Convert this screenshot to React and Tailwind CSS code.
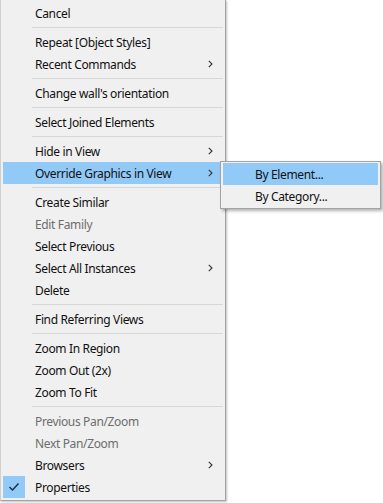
import React from "react";

const items = [
  { label: "Cancel" },
  { sep: true },
  { label: "Repeat [Object Styles]" },
  { label: "Recent Commands", sub: true },
  { sep: true },
  { label: "Change wall's orientation" },
  { sep: true },
  { label: "Select Joined Elements" },
  { sep: true },
  { label: "Hide in View", sub: true },
  { label: "Override Graphics in View", sub: true, active: true },
  { sep: true },
  { label: "Create Similar" },
  { label: "Edit Family", disabled: true },
  { label: "Select Previous" },
  { label: "Select All Instances", sub: true },
  { label: "Delete" },
  { sep: true },
  { label: "Find Referring Views" },
  { sep: true },
  { label: "Zoom In Region" },
  { label: "Zoom Out (2x)" },
  { label: "Zoom To Fit" },
  { sep: true },
  { label: "Previous Pan/Zoom", disabled: true },
  { label: "Next Pan/Zoom", disabled: true },
  { label: "Browsers", sub: true },
  { label: "Properties", checked: true },
];

function Chevron() {
  return (
    <svg width="5" height="8" viewBox="0 0 5 8" className="text-[#333]">
      <path d="M0.8 0.8 L4 4 L0.8 7.2" fill="none" stroke="currentColor" strokeWidth="1.1" />
    </svg>
  );
}

function Separator() {
  return (
    <div className="flex h-[7px] items-center pl-[31px] pr-[2px]">
      <div className="h-px w-full bg-[#d7d7d7]" />
    </div>
  );
}

function Item({ label, sub, active, disabled, checked }) {
  return (
    <div
      className={
        "relative mx-[2px] flex h-[22px] items-center pl-[32px] pr-[10px] " +
        (active ? "bg-[#91c9f7]" : "")
      }
    >
      {checked && (
        <div className="absolute left-0 top-0 flex h-[22px] w-[22px] items-center justify-center bg-[#91c9f7]">
          <svg width="12" height="10" viewBox="0 0 12 10">
            <path d="M1.5 5 L4.5 8 L10.5 1.5" fill="none" stroke="#1d2a4a" strokeWidth="1.4" />
          </svg>
        </div>
      )}
      <span
        className={
          "pt-[2px] tracking-[-0.35px] " + (disabled ? "text-[#6d6d6d]" : "text-[#111]")
        }
      >
        {label}
      </span>
      {sub && (
        <span className="ml-auto">
          <Chevron />
        </span>
      )}
    </div>
  );
}

export default function App() {
  return (
    <div
      className="relative h-[503px] w-[383px] overflow-hidden bg-white text-[12px] leading-none"
      style={{ fontFamily: '"Noto Sans", "Open Sans", sans-serif' }}
    >
      {/* Main context menu */}
      <div className="h-[501px] w-[226px] border-b border-l border-r border-[#a3a3a3] border-l-[#cfcfcf] bg-[#f0f0f0] pt-[2px] shadow-[1px_1px_2px_rgba(0,0,0,0.25)]">
        {items.map((it, i) => (it.sep ? <Separator key={i} /> : <Item key={i} {...it} />))}
      </div>

      {/* Submenu */}
      <div className="absolute left-[220px] top-[161px] w-[161px] border border-[#a3a3a3] bg-[#f0f0f0] py-[1px] shadow-[2px_2px_3px_rgba(0,0,0,0.3)]">
        <Item label="By Element..." active />
        <Item label="By Category..." />
      </div>
    </div>
  );
}
